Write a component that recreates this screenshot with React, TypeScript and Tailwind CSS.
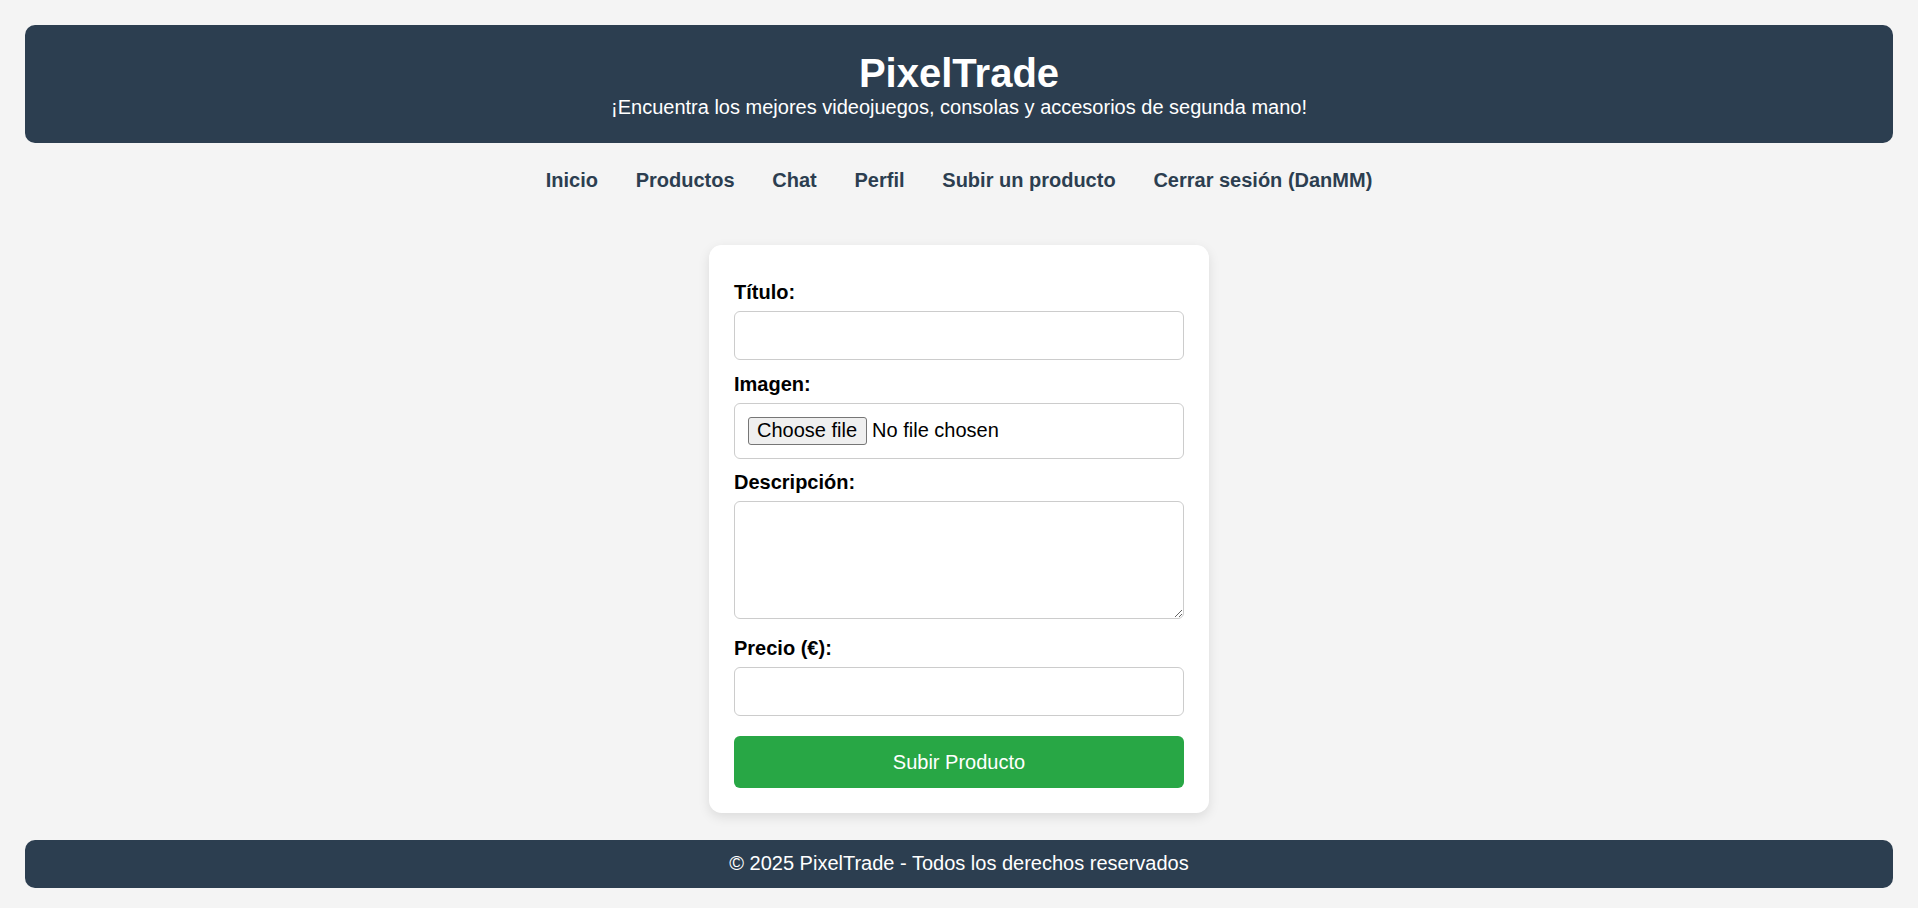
import React from "react";

const navLinks = ["Inicio", "Productos", "Chat", "Perfil", "Subir un producto", "Cerrar sesión (DanMM)"];

const App = () => {
  return (
    <div
      className="min-h-[908px] w-full bg-[#f4f4f4] px-[25px] pt-[25px] text-[20px] text-black"
      style={{ fontFamily: '"Liberation Sans", Arial, sans-serif' }}
    >
      {/* header */}
      <header className="rounded-[10px] bg-[#2c3e50] pt-[25px] pb-[23.5px] text-center text-white">
        <h1 className="text-[40px] font-bold leading-[46px]">PixelTrade</h1>
        <p className="text-[20px] leading-[23px]">
          ¡Encuentra los mejores videojuegos, consolas y accesorios de segunda mano!
        </p>
      </header>

      {/* nav */}
      <nav className="mt-[26px] flex justify-center gap-[37.75px]">
        {navLinks.map((link) => (
          <a key={link} href="#" className="text-[20px] font-bold leading-[23px] text-[#2c3e50]">
            {link}
          </a>
        ))}
      </nav>

      {/* form card */}
      <div className="mx-auto mt-[53px] w-[500px] rounded-[12.5px] bg-white px-[25px] pt-[25px] pb-[25px] shadow-[0_4px_12px_rgba(0,0,0,0.1)]">
        <form className="flex flex-col" onSubmit={(e) => e.preventDefault()}>
          <label className="mt-[11.5px] block text-[20px] font-bold leading-[23px]">Título:</label>
          <input
            type="text"
            className="mt-[6.75px] h-[49px] w-full rounded-[6px] border border-[#ccc] bg-white px-[12px] text-[20px] outline-none"
          />

          <label className="mt-[13.25px] block text-[20px] font-bold leading-[23px]">Imagen:</label>
          <label className="mt-[7px] flex h-[55.5px] cursor-pointer items-center rounded-[6px] border border-[#ccc] bg-white px-[12.5px]">
            <input type="file" className="hidden" />
            <span className="flex h-[28.5px] items-center rounded-[3px] border border-[#767676] bg-[#efefef] px-[8.5px] text-[20px] leading-[23px] text-black">
              Choose file
            </span>
            <span className="ml-[5.5px] text-[20px] leading-[23px] text-black">No file chosen</span>
          </label>

          <label className="mt-[12.5px] block text-[20px] font-bold leading-[23px]">Descripción:</label>
          <textarea
            className="mt-[6.75px] block h-[118px] w-full resize-y rounded-[6px] border border-[#ccc] bg-white p-[12px] text-[20px] outline-none"
          />

          <label className="mt-[18.25px] block text-[20px] font-bold leading-[23px]">Precio (€):</label>
          <input
            type="number"
            className="mt-[6.75px] h-[49.5px] w-full rounded-[6px] border border-[#ccc] bg-white px-[12px] text-[20px] outline-none"
          />

          <button
            type="submit"
            className="mt-[19.25px] h-[52.75px] w-full rounded-[6px] bg-[#28a745] text-[20px] text-white"
          >
            Subir Producto
          </button>
        </form>
      </div>

      {/* footer */}
      <footer className="mt-[26.25px] rounded-[10px] bg-[#2c3e50] py-[12.5px] text-center text-[20px] leading-[23px] text-white">
        © 2025 PixelTrade - Todos los derechos reservados
      </footer>
    </div>
  );
};

export default App;
